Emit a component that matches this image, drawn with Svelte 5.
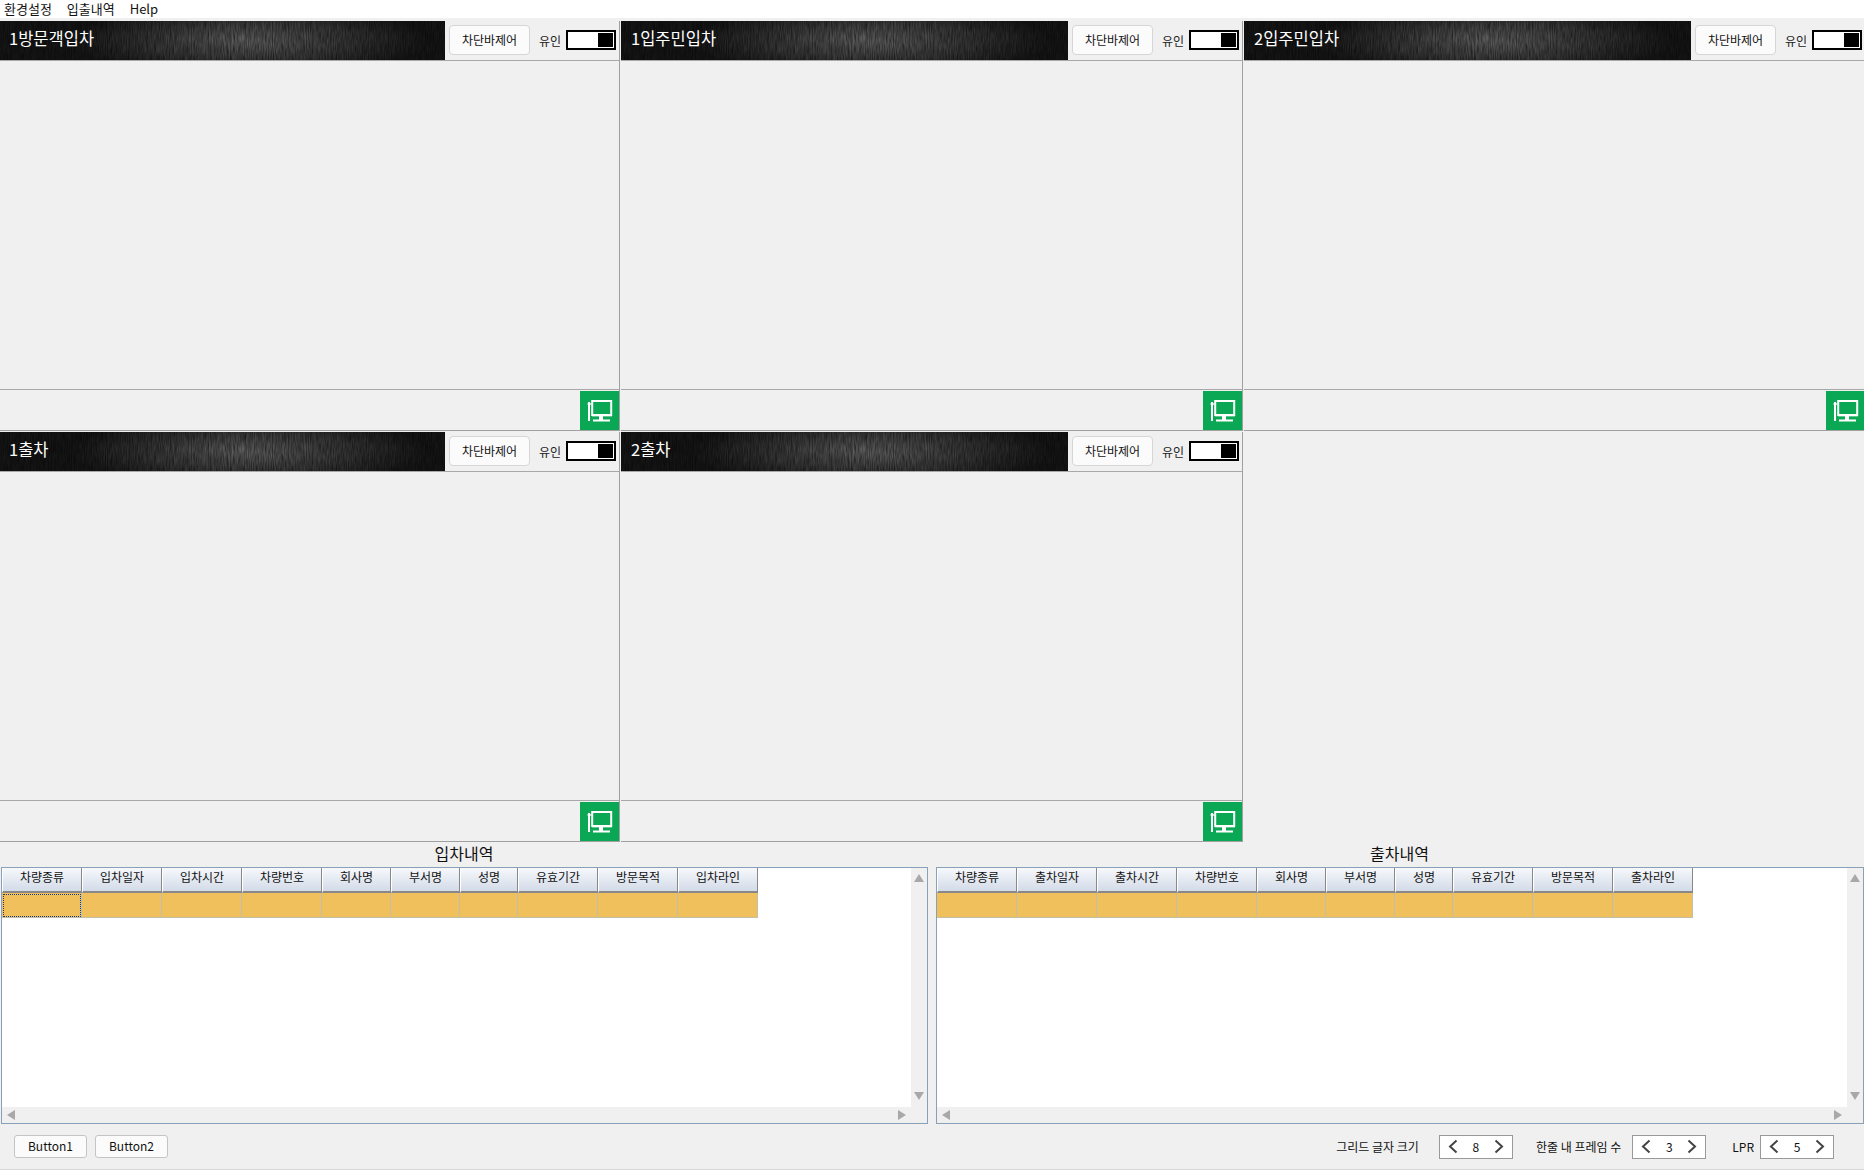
<script>
	const cams = [
		{ id: 'a', name: '1방문객입차' },
		{ id: 'b', name: '1입주민입차' },
		{ id: 'c', name: '2입주민입차' },
		{ id: 'd', name: '1출차' },
		{ id: 'e', name: '2출차' }
	]
	const tables = [
		{ title: '입차내역', cols: ['차량종류', '입차일자', '입차시간', '차량번호', '회사명', '부서명', '성명', '유효기간', '방문목적', '입차라인'], focus: true },
		{ title: '출차내역', cols: ['차량종류', '출차일자', '출차시간', '차량번호', '회사명', '부서명', '성명', '유효기간', '방문목적', '출차라인'], focus: false }
	]
	const spinners = [
		{ label: '그리드 글자 크기', value: 8, cls: 'grid-size' },
		{ label: '한줄 내 프레임 수', value: 3, cls: 'frames' },
		{ label: 'LPR', value: 5, cls: 'lpr' }
	]
</script>

<div class="app">
	<nav class="menu">
		<span>환경설정</span>
		<span>입출내역</span>
		<span>Help</span>
	</nav>

	<section class="cams">
		{#each cams as cam}
			<article class="cam">
				<header class="cam-head">
					<div class="title">
						<svg class="noise" width="100%" height="100%">
							<filter id="streak-{cam.id}" x="0" y="0" width="100%" height="100%">
								<feTurbulence type="fractalNoise" baseFrequency="0.95 0.09" numOctaves="2" seed="4" />
								<feColorMatrix values="0 0 0 0 0  0 0 0 0 0  0 0 0 0 0  0.9 0 0 0 -0.22" />
							</filter>
							<rect width="100%" height="100%" filter="url(#streak-{cam.id})" />
						</svg>
						<span>{cam.name}</span>
					</div>
					<div class="controls">
						<button class="bar-btn">차단바제어</button>
						<span class="mode">유인</span>
						<span class="toggle"><i></i></span>
					</div>
				</header>
				<div class="view"></div>
				<footer class="cam-foot">
					<div class="monitor">
						<svg width="39" height="39" viewBox="0 0 39 39" fill="none">
							<path d="M9 11v19" stroke="#fff" stroke-width="2" />
							<path d="M7.5 13h4" stroke="#fff" stroke-width="1.4" />
							<rect x="12.2" y="10" width="19" height="14" stroke="#fff" stroke-width="2" />
							<path d="M12 25.5h20" stroke="#fff" stroke-opacity=".35" stroke-width="1" />
							<path d="M21 25v4" stroke="#fff" stroke-width="4" />
							<path d="M13 29.500h17" stroke="#fff" stroke-width="2" />
						</svg>
					</div>
				</footer>
			</article>
		{/each}
	</section>

	<section class="lists">
		{#each tables as t}
			<div class="list">
				<h2>{t.title}</h2>
				<div class="box">
					<div class="rows">
						<div class="row head">
							{#each t.cols as c}
								<div class="cell">{c}</div>
							{/each}
						</div>
						<div class="row data">
							{#each t.cols as c, i}
								<div class="cell" class:focus={t.focus && i === 0}></div>
							{/each}
						</div>
					</div>
					<div class="vscroll">
						<i class="arrow up"></i>
						<i class="arrow down"></i>
					</div>
					<div class="hscroll">
						<i class="arrow left"></i>
						<i class="arrow right"></i>
					</div>
					<div class="corner"></div>
				</div>
			</div>
		{/each}
	</section>

	<footer class="bottom">
		<div class="left-btns">
			<button class="small-btn">Button1</button>
			<button class="small-btn">Button2</button>
		</div>
		<div class="settings">
			{#each spinners as s}
				<div class="setting {s.cls}">
					<span class="setting-label">{s.label}</span>
					<div class="spinner">
						<svg width="10" height="15" viewBox="0 0 10 15" fill="none"><path d="M8.500 1.500 2 7.500l6.500 6" stroke="#444" stroke-width="2" /></svg>
						<span>{s.value}</span>
						<svg width="10" height="15" viewBox="0 0 10 15" fill="none"><path d="M1.500 1.500 8 7.500l-6.500 6" stroke="#444" stroke-width="2" /></svg>
					</div>
				</div>
			{/each}
		</div>
	</footer>
</div>

<style>
	:global(body) {
		background: #f0f0f0;
	}
	.app {
		width: 1864px;
		height: 1170px;
		overflow: hidden;
		display: flex;
		flex-direction: column;
		background: #f0f0f0;
		color: #111;
		font-family: 'Noto Sans CJK KR', 'Noto Sans', sans-serif;
		font-size: 12px;
	}
	.menu {
		height: 18px;
		flex: none;
		margin-bottom: 3px;
		padding-left: 4px;
		display: flex;
		align-items: center;
		gap: 15px;
		background: #fff;
		font-size: 13px;
		line-height: 18px;
	}

	.cams {
		display: grid;
		grid-template-columns: 621px 623px 620px;
		grid-template-rows: 410px 410px;
		row-gap: 1px;
		flex: none;
	}
	.cam {
		display: flex;
		flex-direction: column;
		overflow: hidden;
		border-bottom: 1px solid #a0a0a0;
		border-right: 1px solid #a0a0a0;
		margin-right: 1px;
	}
	.cam:nth-child(3) {
		border-right: 0;
		margin-right: 0;
	}
	.cam-head {
		height: 40px;
		flex: none;
		display: flex;
		border-bottom: 1px solid #a8a8a8;
		box-sizing: border-box;
	}
	.title {
		position: relative;
		width: 447px;
		flex: none;
		display: flex;
		align-items: center;
		padding-left: 10px;
		box-sizing: border-box;
		overflow: hidden;
		background:
			radial-gradient(ellipse 40% 95% at 56% 50%, #626262 0%, #424242 40%, rgba(26, 26, 26, 0) 100%),
			#161616;
		color: #fff;
		font-size: 16.5px;
	}
	.cam:first-child .title,
	.cam:nth-child(4) .title {
		width: 445px;
		padding-left: 9px;
	}
	.title span {
		position: relative;
		margin-top: -5px;
	}
	.noise {
		position: absolute;
		inset: 0;
	}
	.controls {
		flex: none;
		display: flex;
		align-items: center;
		padding: 0 0 1px 4px;
	}
	.bar-btn {
		width: 81px;
		height: 30px;
		padding: 0 0 2px;
		border: 1px solid #d6d6d6;
		border-radius: 4px;
		background: #fbfbfb;
		color: #111;
		font: inherit;
		font-size: 12px;
	}
	.mode {
		margin-left: 9px;
		width: 27px;
		color: #222;
	}
	.toggle {
		width: 50px;
		height: 20px;
		box-sizing: border-box;
		display: flex;
		justify-content: flex-end;
		border: 2px solid #000;
		padding: 1px;
		background: #fff;
	}
	.toggle i {
		width: 15px;
		background: #000;
	}
	.view {
		flex: 1;
	}
	.cam-foot {
		height: 41px;
		flex: none;
		box-sizing: border-box;
		border-top: 1px solid #a8a8a8;
		padding-top: 1px;
		display: flex;
		justify-content: flex-end;
	}
	.monitor {
		width: 39px;
		height: 39px;
		background: #0aa854;
	}
	.cam:nth-child(3) .monitor {
		width: 38px;
	}

	.lists {
		height: 282px;
		flex: none;
		display: grid;
		grid-template-columns: 928px 929px;
		column-gap: 7px;
	}
	.list {
		display: flex;
		flex-direction: column;
		min-width: 0;
	}
	h2 {
		height: 25px;
		margin: 0;
		flex: none;
		text-align: center;
		font-size: 16px;
		font-weight: 400;
		line-height: 23px;
		color: #111;
	}
	.box {
		height: 257px;
		margin-left: 1px;
		box-sizing: border-box;
		border: 1px solid #88a0b8;
		display: grid;
		grid-template-columns: 1fr 16px;
		grid-template-rows: 1fr 16px;
		background: #fff;
	}
	.row {
		display: grid;
		grid-template-columns: 80px 80px 80px 80px 69px 69px 58px 80px 80px 80px;
		width: 756px;
	}
	.head .cell {
		height: 25px;
		box-sizing: border-box;
		text-align: center;
		line-height: 18px;
		font-size: 12px;
		color: #111;
		border-left: 1px solid #fff;
		border-right: 1px solid #888;
		border-bottom: 2px solid #888;
		background: linear-gradient(#f6f8fb, #d3dbe8);
	}
	.data .cell {
		height: 25px;
		box-sizing: border-box;
		background: #f0c05c;
		border-right: 1px solid #c4bea8;
		border-bottom: 1px solid #c4bea8;
	}
	.data .cell.focus {
		outline: 1px dotted #123a8c;
		outline-offset: -2px;
	}
	.vscroll {
		background: #f0f0f0;
		display: flex;
		flex-direction: column;
		justify-content: space-between;
		align-items: center;
		padding: 6px 0 7px;
	}
	.hscroll {
		background: #f0f0f0;
		display: flex;
		align-items: center;
		justify-content: space-between;
		padding: 0 5px;
	}
	.corner {
		background: #f0f0f0;
	}
	.arrow {
		display: block;
		width: 0;
		height: 0;
		border-style: solid;
		border-color: transparent;
	}
	.up {
		border-width: 0 5px 8px;
		border-bottom-color: #a8a8a8;
	}
	.down {
		border-width: 8px 5px 0;
		border-top-color: #a8a8a8;
	}
	.left {
		border-width: 5px 8px 5px 0;
		border-right-color: #a8a8a8;
	}
	.right {
		border-width: 5px 0 5px 8px;
		border-left-color: #a8a8a8;
	}

	.bottom {
		flex: 1;
		display: flex;
		align-items: center;
		justify-content: space-between;
		padding: 0 30px 0 14px;
		border-bottom: 1px solid #d8d8d8;
	}
	.left-btns {
		display: flex;
		gap: 8px;
		margin-top: -1px;
	}
	.small-btn {
		width: 73px;
		height: 23px;
		padding: 0 0 2px;
		border: 1px solid #c4c4c4;
		border-radius: 3px;
		background: #fbfbfb;
		color: #111;
		font: inherit;
		font-size: 12px;
	}
	.settings {
		display: flex;
		align-items: center;
	}
	.setting {
		display: flex;
		align-items: center;
	}
	.grid-size {
		gap: 20px;
	}
	.frames {
		gap: 11px;
		margin-left: 23px;
	}
	.lpr {
		gap: 6px;
		margin-left: 26px;
	}
	.spinner {
		width: 74px;
		height: 24px;
		box-sizing: border-box;
		border: 1px solid #999;
		background: #fff;
		display: flex;
		align-items: center;
		justify-content: space-between;
		padding: 0 8px;
	}
</style>
